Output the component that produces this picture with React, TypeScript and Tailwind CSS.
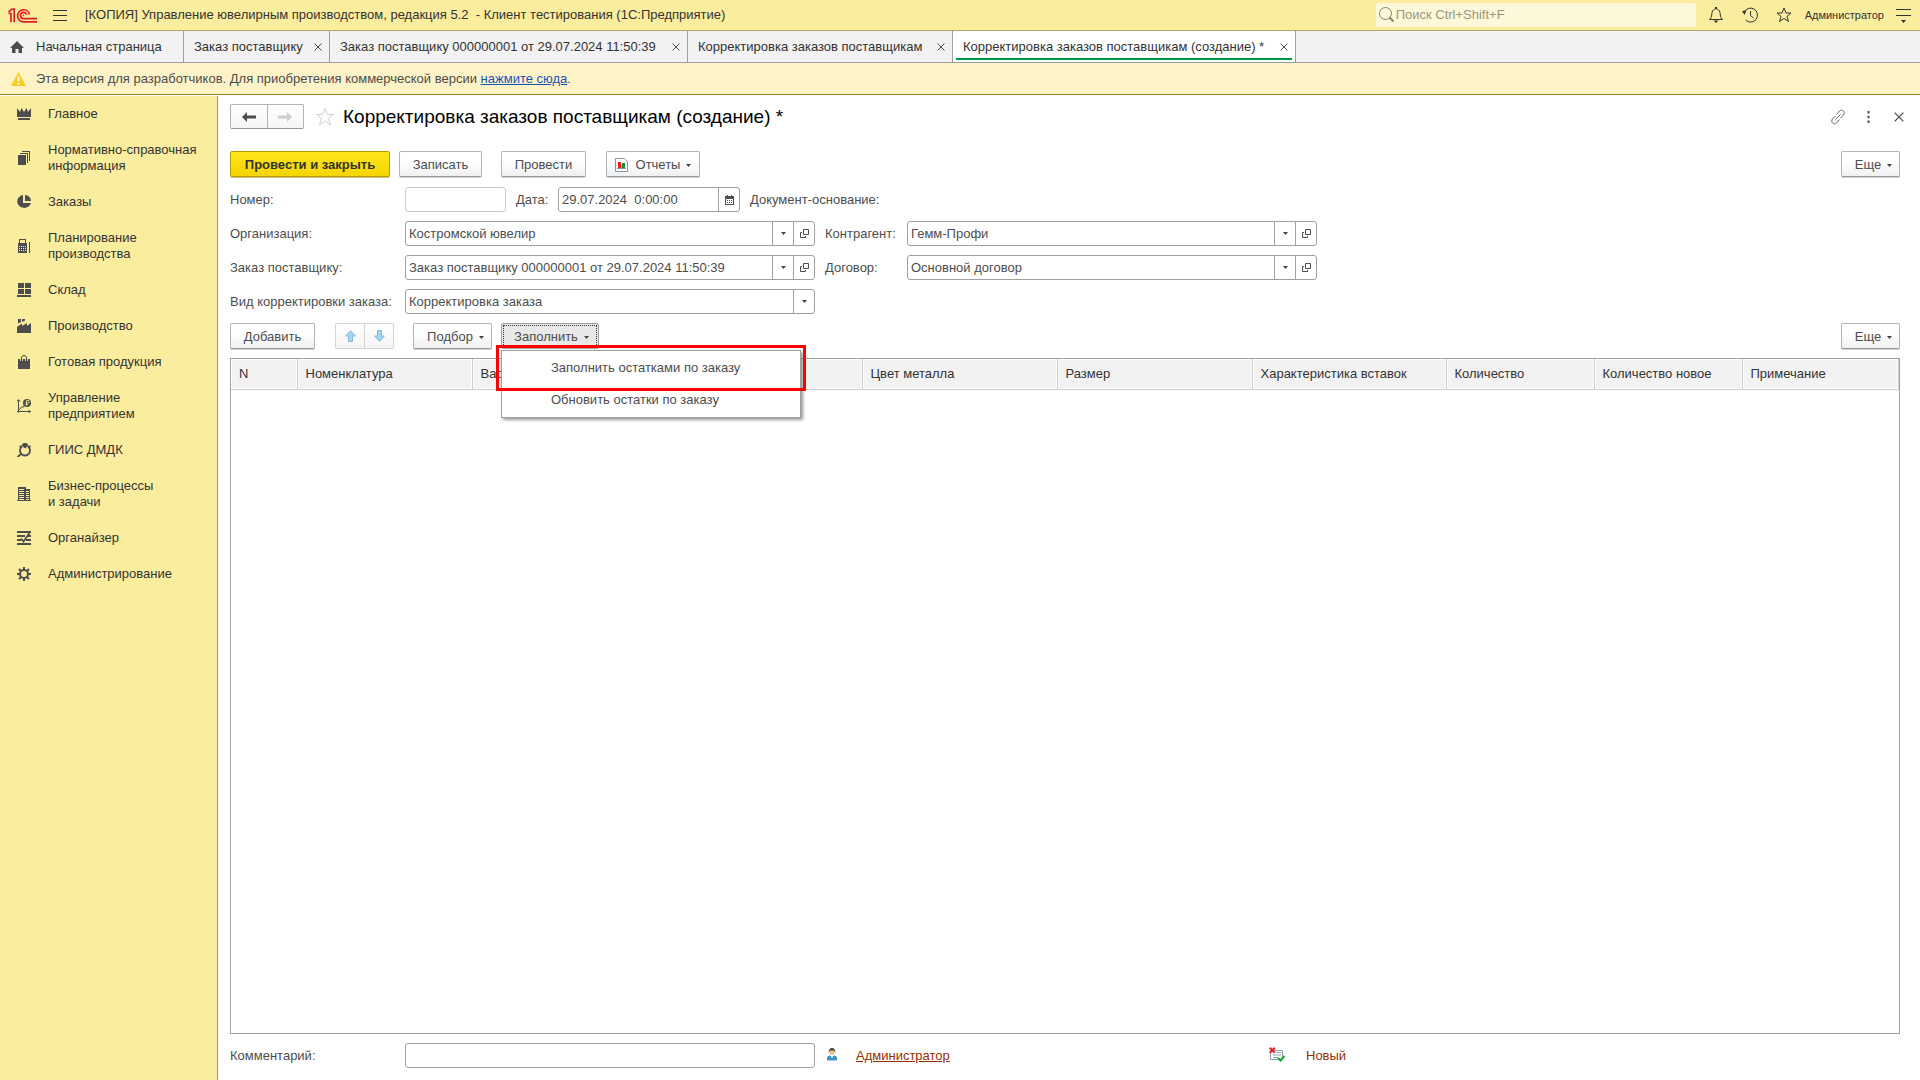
import type { ReactNode } from 'react';

type IconProps = { children: ReactNode; size?: number; className?: string };

const Icon = ({ children, size = 14, className = 'size-[14px]' }: IconProps) => (
  <svg
    viewBox={`0 0 ${size} ${size}`}
    className={`shrink-0 ${className}`}
    fill="currentColor"
    aria-hidden="true"
  >
    {children}
  </svg>
);

const Caret = () => (
  <svg viewBox="0 0 5 3" className="h-[3px] w-[5px] shrink-0" fill="#444" aria-hidden="true">
    <path d="M0 0h5L2.5 3z" />
  </svg>
);

const Cross = ({ className = 'size-2' }: { className?: string }) => (
  <svg viewBox="0 0 8 8" className={className} stroke="#4d4d4d" strokeWidth="1" aria-hidden="true">
    <path d="M.5.5l7 7M7.5.5l-7 7" />
  </svg>
);

const sections: { title: ReactNode; icon: ReactNode }[] = [
  {
    title: 'Главное',
    icon: <path d="M0 1l3 4 1.500-4L7 5l2.500-4L11 5l3-4v9H0zM1 11h12v2H1z" />,
  },
  {
    title: 'Нормативно-справочная информация',
    icon: <path d="M1 4h8v10H1zM3 2h8v10h-1V3H3zM5 0h8v10h-1V1H5z" />,
  },
  {
    title: 'Заказы',
    icon: <path d="M6 0v8h8A7 6.500 0 1 1 6 0zM8 0a6 6 0 0 1 6 6H8z" />,
  },
  {
    title: (
      <>
        Планирование
        <br />
        производства
      </>
    ),
    icon: (
      <path
        fillRule="evenodd"
        d="M2 0h7v4h1v10H1V4h1zM3 1v3h5V1zM2 7v1h1V7zm2 0v1h1V7zm2 0v1h1V7zm2 0v1h1V7zM2 9v1h1V9zm2 0v1h1V9zm2 0v1h1V9zm2 0v1h1V9zm-6 2v1h1v-1zm2 0v1h1v-1zm2 0v1h1v-1zm2 0v1h1v-1zM12 3h1v11h-1z"
      />
    ),
  },
  {
    title: 'Склад',
    icon: <path d="M1 0h6v5H1zM8 0h6v5H8zM1 6h6v5H1zM8 6h6v5H8zM0 12h14v2H0z" />,
  },
  {
    title: 'Производство',
    icon: <path d="M1 0h3v3L1 4.500zM5 0h3v1.500L5 3zM0 14V8l5-3.500V7l5-3v3l4-3v10z" />,
  },
  {
    title: 'Готовая продукция',
    icon: (
      <>
        <path d="M1 4h12v10H1z" />
        <path d="M4.500 6V3a2.500 2.500 0 0 1 5 0v3" fill="none" stroke="#fbed9e" strokeWidth="2.500" />
        <path d="M4.500 6V3a2.500 2.500 0 0 1 5 0v3" fill="none" stroke="currentColor" />
      </>
    ),
  },
  {
    title: (
      <>
        Управление
        <br />
        предприятием
      </>
    ),
    icon: (
      <>
        <path d="M1.500 1v12.500M0 12.500h13.500M0 2.500l1.500-2 1.500 2M11.500 11l2 1.500-2 1.500M2 11l2.500-3h2l1-2" fill="none" stroke="currentColor" />
        <circle cx="10" cy="4" r="4" />
        <path d="M9.500 6.500v-5h1.500a1.200 1.200 0 0 1 0 2.500H8.500M8.500 5.500H11" fill="none" stroke="#fbed9e" strokeWidth=".8" />
      </>
    ),
  },
  {
    title: 'ГИИС ДМДК',
    icon: (
      <>
        <path d="M5 3.500A5 5 0 1 0 11 3.500M4 11l-3.500 3M2.500 3.500H5M13.500 3.500H11" fill="none" stroke="currentColor" strokeWidth="1.800" />
        <path d="M5 1.500L6.500 0h3L11 1.500v1.500L8 5.500 5 3z" />
      </>
    ),
  },
  {
    title: (
      <>
        Бизнес-процессы
        <br />и задачи
      </>
    ),
    icon: (
      <path
        fillRule="evenodd"
        d="M1 0h8v2h4v11h1v1H0v-1h1zM2 2v1h5V2zm0 2v1h5V4zm0 2v1h5V6zm0 2v1h5V8zm0 2v1h5v-1zm0 2v1h5v-1zM9 4v1h3V4zm0 2v1h3V6zm0 2v1h3V8zm0 2v1h3v-1zm0 2v1h3v-1z"
      />
    ),
  },
  {
    title: 'Органайзер',
    icon: (
      <>
        <path d="M0 0h14v2H0zM0 4h8v2H0zM11 4h3v2h-3zM0 8h4v2H0zM9 8h5v2H9zM0 12h14v2H0z" />
        <path d="M4 7.500l2.500 3L12.500 2" fill="none" stroke="currentColor" strokeWidth="1.800" />
      </>
    ),
  },
  {
    title: 'Администрирование',
    icon: (
      <>
        <circle cx="7" cy="7" r="4" fill="none" stroke="currentColor" strokeWidth="2" />
        <path
          d="M7 0v3M7 11v3M0 7h3M11 7h3M2 2l2 2M10 10l2 2M12 2l-2 2M4 10l-2 2"
          stroke="currentColor"
          strokeWidth="2"
        />
      </>
    ),
  },
];

const tabs = [
  { title: 'Заказ поставщику', width: 'w-[146px]' },
  { title: 'Заказ поставщику 000000001 от 29.07.2024 11:50:39', width: 'w-[358px]' },
  { title: 'Корректировка заказов поставщикам', width: 'w-[265px]' },
  { title: 'Корректировка заказов поставщикам (создание) *', width: 'w-[343px]', active: true },
];

const columns = [
  { title: 'N', width: 'w-[66px]' },
  { title: 'Номенклатура', width: 'w-[175px]' },
  { title: 'Вариант', width: 'w-[390px]' },
  { title: 'Цвет металла', width: 'w-[195px]' },
  { title: 'Размер', width: 'w-[195px]' },
  { title: 'Характеристика вставок', width: 'w-[194px]' },
  { title: 'Количество', width: 'w-[148px]' },
  { title: 'Количество новое', width: 'w-[148px]' },
  { title: 'Примечание', width: '' },
];

const buttonClass =
  'flex h-[26px] items-center justify-center rounded-xs border border-[#b3b3b3] border-b-[#999] bg-linear-to-b from-white from-40% to-[#f0f0f0] pt-px shadow-[0_1px_0_#d0d0d0] whitespace-nowrap';

type ButtonProps = { children: ReactNode; className?: string; caret?: boolean };

const Button = ({ children, className = '', caret }: ButtonProps) => (
  <button type="button" className={`${buttonClass} ${className}`}>
    {children}
    {caret && (
      <span className="mt-[2px] ml-[6px] flex">
        <Caret />
      </span>
    )}
  </button>
);

type FieldProps = { id: string; label: string; value: string; labelClass: string };

// Reference field: value, list button and "open" button
const ReferenceField = ({ id, label, value, labelClass }: FieldProps) => (
  <div className="flex items-center">
    <label htmlFor={id} className={labelClass}>
      {label}
    </label>
    <div className="flex h-[25px] w-[410px] rounded-[3px] border border-[#a0a0a0]">
      <input id={id} defaultValue={value} className="min-w-0 flex-1 px-[3px] outline-none" />
      <button
        type="button"
        aria-label={`${label} выбрать`}
        className="flex w-[21px] items-center justify-center border-l border-[#a0a0a0]"
      >
        <Caret />
      </button>
      <button
        type="button"
        aria-label={`${label} открыть`}
        className="flex w-[21px] items-center justify-center border-l border-[#a0a0a0]"
      >
        <svg viewBox="0 0 9 9" className="size-[9px]" fill="none" stroke="#4d4d4d" aria-hidden="true">
          <path d="M3.500.5h5v5h-5zM2 3.500H.5v5h5V7" />
        </svg>
      </button>
    </div>
  </div>
);

const TitleBar = () => (
  <header className="flex h-[31px] items-center border-b border-[#b0a66e] bg-[#fbed9e] text-[#333]">
    <svg viewBox="0 0 30 15" className="ml-2 h-[15px] w-[30px] shrink-0" fill="none" stroke="#e31e24" strokeWidth="1.700" aria-label="1С">
      <path d="M.5 5.500h2.500v8.700M.5 4l3.500-3h2.200v13.200" />
      <path d="M21.500 6.500a6 6 0 1 0-6 7.300H29M18.700 6.500a3.200 3.200 0 1 0-3.200 4.200H29" />
      <circle cx="15.500" cy="7.300" r=".8" fill="#e31e24" stroke="none" />
    </svg>
    <button type="button" aria-label="Меню" className="ml-[15px]">
      <svg viewBox="0 0 14 11" className="h-[11px] w-[14px]" stroke="#333" aria-hidden="true">
        <path d="M0 .5h14M0 5.500h14M0 10.500h14" />
      </svg>
    </button>
    <span className="ml-[18px] flex-1 whitespace-pre">
      {'[КОПИЯ] Управление ювелирным производством, редакция 5.2  - Клиент тестирования (1С:Предприятие)'}
    </span>
    <div className="mb-px flex h-6 w-[320px] items-center rounded-xs bg-[#fdf8da] pl-[3px] text-[#8a8570]">
      <svg viewBox="0 0 15 15" className="size-[15px]" fill="none" stroke="#8a8570" aria-hidden="true">
        <circle cx="6.500" cy="6.500" r="6" />
        <path d="M10.500 10.500l4 4" strokeWidth="2" />
      </svg>
      <input
        type="search"
        aria-label="Поиск"
        placeholder="Поиск Ctrl+Shift+F"
        className="min-w-0 flex-1 pl-[2px] outline-none placeholder:text-[#9c977c]"
      />
    </div>
    <button type="button" aria-label="Уведомления" className="ml-3">
      <Icon size={16} className="size-4">
        <path d="M1.500 12.500C4 10.500 3.500 8 4 5.500 4.500 3 6 2.500 8 1.500c2 1 3.500 1.500 4 4 .5 2.500 0 5 2.500 7z" fill="none" stroke="currentColor" />
        <path d="M5.500 13.500h5L8 16zM7 0h2v2H7z" />
      </Icon>
    </button>
    <button type="button" aria-label="История" className="ml-[18px]">
      <Icon size={16} className="size-4">
        <path d="M2 5.500A7 7 0 1 1 3.500 13M8.500 4v4.500l3 2.500" fill="none" stroke="currentColor" />
        <path d="M0 4l4.500-.5L2.500 8z" />
      </Icon>
    </button>
    <button type="button" aria-label="Избранное" className="ml-[18px]">
      <Icon size={16} className="size-4">
        <path d="M8 1l2 5h5l-4 3.500 1.500 5L8 11.500l-4.500 3 1.500-5L1 6h5z" fill="none" stroke="currentColor" />
      </Icon>
    </button>
    <a href="#user" className="ml-[13px] text-[11px]">
      Администратор
    </a>
    <button type="button" aria-label="Настройки" className="mr-[9px] ml-3">
      <svg viewBox="0 0 15 14" className="mt-px h-[14px] w-[15px]" fill="#333" aria-hidden="true">
        <path d="M0 0h15v1H0zM0 6h15v1H0zM5 11h5l-2.500 3z" />
      </svg>
    </button>
  </header>
);

const TabBar = () => (
  <nav className="flex h-8 border-b border-[#a0a0a0] bg-[#f2f2f2] text-[#333]">
    <a href="#home" className="flex w-[184px] items-center border-r border-[#a0a0a0] pl-[10px]">
      <svg viewBox="0 0 14 12" className="h-3 w-[14px]" fill="#4d4d4d" aria-hidden="true">
        <path d="M7 0l7 7h-2v5H8.500V8h-3v4H2V7H0z" />
      </svg>
      <span className="ml-3">Начальная страница</span>
    </a>
    {tabs.map((tab) => (
      <div
        key={tab.title}
        className={`relative flex items-center justify-between border-r border-[#a0a0a0] pr-[7px] pl-[10px] whitespace-nowrap ${tab.width} ${tab.active ? 'bg-white' : ''}`}
      >
        <a href="#tab">{tab.title}</a>
        <button type="button" aria-label="Закрыть">
          <Cross />
        </button>
        {tab.active && <div className="absolute inset-x-[3px] bottom-[2px] h-[2px] bg-[#009646]" />}
      </div>
    ))}
  </nav>
);

const Sidebar = () => (
  <nav className="w-[218px] shrink-0 border-r border-[#a39a67] bg-[#fbed9e] text-[#333]">
    {sections.map((section, index) => (
      <a key={index} href="#section" className="flex items-center py-[10px] pl-[17px] leading-4">
        <Icon className="size-[14px] text-[#4d4d4d]">{section.icon}</Icon>
        <span className="ml-[17px] w-[160px]">{section.title}</span>
      </a>
    ))}
  </nav>
);

const FillMenu = () => (
  <div className="relative">
    <button
      type="button"
      aria-expanded="true"
      className="flex h-[26px] w-[98px] items-center justify-center rounded-xs border border-[#a0a0a0] bg-[#e8e8e8] p-px"
    >
      <span className="flex size-full items-center justify-center border border-dotted border-[#333] pt-px pl-[3px]">
        Заполнить
        <span className="mt-[2px] ml-[6px] flex">
          <Caret />
        </span>
      </span>
    </button>
    <div
      role="menu"
      className="absolute top-[27px] left-0 z-10 flex h-[68px] w-[300px] flex-col border border-[#a0a0a0] bg-white shadow-[2px_2px_3px_rgba(0,0,0,0.4)]"
    >
      <button type="button" role="menuitem" className="h-[34px] pl-[49px] text-left">
        Заполнить остатками по заказу
      </button>
      <button type="button" role="menuitem" className="h-[30px] pl-[49px] text-left">
        Обновить остатки по заказу
      </button>
    </div>
    <div className="pointer-events-none absolute top-[22px] left-[-5px] z-20 h-[46px] w-[310px] border-3 border-[#ff0000]" />
  </div>
);

const MoveArrow = ({ down }: { down?: boolean }) => (
  <svg viewBox="0 0 11 12" className={`h-3 w-[11px] ${down ? 'rotate-180' : ''}`} fill="#a3d5f3" stroke="#86b9da" aria-hidden="true">
    <path d="M5.500.7l4.800 5.300H7.500v5.500h-4V6H.7z" />
  </svg>
);

const App = () => (
  <div className="flex min-h-screen flex-col bg-white font-['Liberation_Sans',Arial,sans-serif] text-[13px] leading-4 text-[#4d4d4d]">
    <TitleBar />
    <TabBar />
    <div className="flex h-8 items-center border-b border-[#9a7d1c] bg-[#fef2c7] pl-[11px]">
      <svg viewBox="0 0 15 14" className="h-[14px] w-[15px]" aria-hidden="true">
        <path d="M7.500 0L15 14H0z" fill="#fccb1b" />
        <path d="M6.500 4.500h2V9h-2zM6.500 10.500h2v2h-2z" fill="#fff" />
      </svg>
      <span className="ml-[10px]">
        Эта версия для разработчиков. Для приобретения коммерческой версии{' '}
        <a href="#buy" className="text-[#1a55b5] underline">
          нажмите сюда
        </a>
        .
      </span>
    </div>

    <div className="mt-px flex flex-1">
      <Sidebar />

      <main className="flex min-w-0 flex-1 flex-col pt-2 pr-5 pb-3 pl-3">
        {/* Form header */}
        <div className="flex h-[25px] items-center">
          <div className="flex h-[25px] w-[74px] rounded-xs border border-[#b3b3b3] border-b-[#999] bg-linear-to-b from-white to-[#f5f5f5]">
            <button type="button" aria-label="Назад" className="flex flex-1 items-center justify-center border-r border-[#b3b3b3] text-[#4d4d4d]">
              <Icon>
                <path d="M0 7l5-5v3.500h9v3H5V12z" />
              </Icon>
            </button>
            <button type="button" aria-label="Вперед" className="flex flex-1 items-center justify-center text-[#cfcfcf]">
              <Icon>
                <path d="M14 7L9 2v3.500H0v3h9V12z" />
              </Icon>
            </button>
          </div>
          <button type="button" aria-label="В избранное" className="ml-[11px] text-[#d0d0d0]">
            <Icon size={20} className="size-5">
              <path d="M10 1.500l2.500 6h6L13.500 11.500l2 6.500L10 14l-5.500 4 2-6.500-5-4h6z" fill="none" stroke="currentColor" />
            </Icon>
          </button>
          <h1 className="ml-2 flex-1 text-[19px] text-black">
            Корректировка заказов поставщикам (создание) *
          </h1>
          <button type="button" aria-label="Получить ссылку" className="text-[#666]">
            <Icon size={16} className="size-4">
              <path
                d="M6.500 5.500l3-3.500c2.500-2.500 6.500 1 4 4l-3 3M9.500 10.500l-3 3.500c-2.500 2.500-6.500-1-4-4l3-3M5.500 10.500l5-5"
                fill="none"
                stroke="currentColor"
              />
            </Icon>
          </button>
          <button type="button" aria-label="Действия" className="ml-[21px]">
            <svg viewBox="0 0 3 12" className="h-3 w-[3px]" fill="#4d4d4d" aria-hidden="true">
              <path d="M.5 0h2v2.500h-2zM.5 4.700h2v2.500h-2zM.5 9.400h2v2.500h-2z" />
            </svg>
          </button>
          <button type="button" aria-label="Закрыть" className="mr-[-4px] ml-[24px]">
            <Cross className="size-[10px]" />
          </button>
        </div>

        {/* Command bar */}
        <div className="mt-[22px] flex">
          <button
            type="button"
            className="h-[26px] w-[160px] rounded-xs border border-[#b39b00] bg-linear-to-b from-[#ffe61a] to-[#f5d500] pt-px font-bold text-[#333] shadow-[0_1px_0_#d0c080]"
          >
            Провести и закрыть
          </button>
          <Button className="ml-[9px] w-[83px]">Записать</Button>
          <Button className="ml-[19px] w-[85px]">Провести</Button>
          <Button className="ml-5 w-[94px]" caret>
            <svg viewBox="0 0 13 14" className="mr-2 h-[14px] w-[13px]" aria-hidden="true">
              <path d="M.5.5h9l3 3v10H.5z" fill="#fff" stroke="#8595a5" />
              <path d="M3 4h3v6H3z" fill="#f02020" />
              <path d="M6 7h1v3H6z" fill="#f0a020" />
              <path d="M7 5h3v5H7z" fill="#109040" />
              <path d="M2 10.500h9" stroke="#8595a5" />
            </svg>
            Отчеты
          </Button>
          <Button className="ml-auto w-[59px] pl-[6px]" caret>
            Еще
          </Button>
        </div>

        {/* Document fields */}
        <div className="mt-[10px] flex items-center">
          <label htmlFor="number" className="w-[175px]">
            Номер:
          </label>
          <input id="number" className="h-[25px] w-[101px] rounded-[3px] border border-[#ccc] px-[3px] outline-none" />
          <label htmlFor="date" className="ml-[10px] w-[42px]">
            Дата:
          </label>
          <div className="flex h-[25px] w-[182px] rounded-[3px] border border-[#a0a0a0]">
            <input id="date" defaultValue="29.07.2024  0:00:00" className="min-w-0 flex-1 px-[3px] outline-none" />
            <button type="button" aria-label="Календарь" className="flex w-[21px] items-center justify-center border-l border-[#a0a0a0]">
              <svg viewBox="0 0 9 10" className="h-[10px] w-[9px]" aria-hidden="true">
                <path d="M0 1h2V0h1v1h3V0h1v1h2v9H0z" fill="#4d4d4d" />
                <path d="M1 4h7v5H1z" fill="#fff" />
                <path d="M2 5.500h5M2 7.500h5" stroke="#4d4d4d" strokeDasharray="1 1" />
              </svg>
            </button>
          </div>
          <span className="ml-[10px]">Документ-основание:</span>
        </div>
        <div className="mt-[9px] flex gap-[10px]">
          <ReferenceField id="organization" label="Организация:" value="Костромской ювелир" labelClass="w-[175px]" />
          <ReferenceField id="partner" label="Контрагент:" value="Гемм-Профи" labelClass="w-[82px]" />
        </div>
        <div className="mt-[9px] flex gap-[10px]">
          <ReferenceField
            id="order"
            label="Заказ поставщику:"
            value="Заказ поставщику 000000001 от 29.07.2024 11:50:39"
            labelClass="w-[175px]"
          />
          <ReferenceField id="contract" label="Договор:" value="Основной договор" labelClass="w-[82px]" />
        </div>
        <div className="mt-[9px] flex items-center">
          <label htmlFor="kind" className="w-[175px] whitespace-nowrap">
            Вид корректировки заказа:
          </label>
          <div className="relative h-[25px] w-[410px]">
            <select id="kind" className="size-full appearance-none rounded-[3px] border border-[#a0a0a0] px-[3px] outline-none">
              <option>Корректировка заказа</option>
            </select>
            <div className="pointer-events-none absolute inset-y-px right-px flex w-[21px] items-center justify-center border-l border-[#a0a0a0]">
              <Caret />
            </div>
          </div>
        </div>

        {/* Table command bar */}
        <div className="mt-[9px] flex">
          <Button className="w-[85px]">Добавить</Button>
          <div className="ml-5 flex h-[26px] w-[59px] rounded-xs border border-[#d4d4d4] bg-linear-to-b from-white to-[#f5f5f5]">
            <button type="button" aria-label="Вверх" className="flex flex-1 items-center justify-center border-r border-[#d4d4d4]">
              <MoveArrow />
            </button>
            <button type="button" aria-label="Вниз" className="flex flex-1 items-center justify-center">
              <MoveArrow down />
            </button>
          </div>
          <Button className="mr-[9px] ml-[19px] w-[79px] pl-[6px]" caret>
            Подбор
          </Button>
          <FillMenu />
          <Button className="ml-auto w-[59px] pl-[6px]" caret>
            Еще
          </Button>
        </div>

        <div className="mt-[9px] flex-1 border border-[#a0a0a0]">
          <table className="w-full table-fixed border-collapse text-[#333]">
            <thead>
              <tr className="h-[30px] border-b border-[#ccc]">
                {columns.map((column) => (
                  <th
                    key={column.title}
                    className={`border-r border-[#ccc] bg-[#f2f2f2] pl-2 text-left font-normal whitespace-nowrap shadow-[inset_0_0_0_1px_#fff] ${column.width}`}
                  >
                    {column.title}
                  </th>
                ))}
              </tr>
            </thead>
          </table>
        </div>

        {/* Footer */}
        <div className="mt-[9px] flex items-center">
          <label htmlFor="comment" className="w-[175px]">
            Комментарий:
          </label>
          <input id="comment" className="h-[25px] w-[410px] rounded-[3px] border border-[#a0a0a0] px-[3px] outline-none" />
          <svg viewBox="0 0 10 13" className="mb-[2px] ml-3 h-[13px] w-[10px]" aria-hidden="true">
            <path d="M0 12.500V10q0-2 3-2.500h4q3 .5 3 2.500v2.500z" fill="#3a95cc" />
            <path d="M3.500 7h3L5 10.500z" fill="#fff" />
            <circle cx="5" cy="4" r="2.800" fill="#f2c27c" />
            <path d="M1.800 4.500Q1.500 0 5 0t3.200 4.500L7 2.500H3z" fill="#444" />
          </svg>
          <a href="#author" className="ml-[19px] w-[413px] text-[#953000] underline">
            Администратор
          </a>
          <svg viewBox="0 0 16 15" className="mb-[2px] h-[15px] w-4" aria-hidden="true">
            <path d="M1.500 3.500h12v9h-12z" fill="#fff" stroke="#8fa0b0" />
            <path d="M7 5.500h5M4 8h8M4 10.500h5" stroke="#8fa0b0" />
            <path d="M.8.8l5 5M5.800.8l-5 5" stroke="#e02828" strokeWidth="2.200" />
            <path d="M9 11l2.500 2.500L15.500 9" fill="none" stroke="#18a830" strokeWidth="2.200" />
          </svg>
          <span className="ml-[21px] text-[#953000]">Новый</span>
        </div>
      </main>
    </div>
  </div>
);

export default App;
